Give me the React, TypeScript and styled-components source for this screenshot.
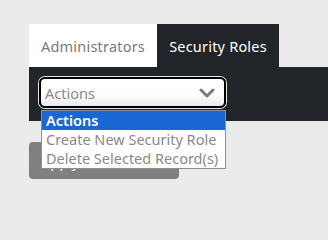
import React from 'react';
import styled, { createGlobalStyle } from 'styled-components';

const GlobalStyle = createGlobalStyle`
  html, body {
    margin: 0;
    padding: 0;
    background: #ebebeb;
    font-family: 'Noto Sans', 'Open Sans', sans-serif;
  }
`;

const Page = styled.div`
  padding: 24px 0 0 29px;
`;

const TabBar = styled.div`
  display: flex;
`;

const Tab = styled.div<{ $active?: boolean }>`
  display: flex;
  align-items: center;
  justify-content: center;
  height: 43px;
  width: ${(p) => (p.$active ? '122px' : '128px')};
  box-sizing: border-box;
  background: ${(p) => (p.$active ? '#212429' : '#ffffff')};
  color: ${(p) => (p.$active ? '#ffffff' : '#7a7a7a')};
  font-size: 14.5px;
  letter-spacing: 0.2px;
  padding-top: 1px;
`;

const Panel = styled.div`
  background: #212429;
  height: 54px;
  box-sizing: border-box;
  padding: 10px 10px;
`;

const SelectWrap = styled.div`
  position: relative;
  width: 187px;
`;

const SelectBox = styled.div`
  display: flex;
  align-items: center;
  justify-content: space-between;
  height: 31px;
  box-sizing: border-box;
  padding: 0 9px 0 4px;
  border: 2px solid #000;
  border-radius: 6px;
  box-shadow: 0 0 0 1px #e6e6e6;
  background: linear-gradient(#ffffff 0%, #ffffff 55%, #e9e9e9 100%);
  color: #8a8a8a;
  font-size: 14.5px;
`;

const OptionList = styled.ul`
  position: absolute;
  top: 33px;
  left: 2px;
  width: 185px;
  margin: 0;
  padding: 0;
  list-style: none;
  background: #fff;
  border: 1px solid #8f8f8f;
  box-sizing: border-box;
  z-index: 2;
`;

const Option = styled.li<{ $selected?: boolean }>`
  height: 19px;
  line-height: 19px;
  padding: 0 4px;
  font-size: 14.5px;
  white-space: nowrap;
  background: ${(p) => (p.$selected ? '#1967d2' : 'transparent')};
  color: ${(p) => (p.$selected ? '#ffffff' : '#8a8a8a')};
  font-weight: ${(p) => (p.$selected ? 600 : 400)};
`;

const ApplyButton = styled.button`
  display: block;
  margin-top: 21px;
  width: 150px;
  height: 37px;
  border: none;
  border-radius: 4px;
  background: #808080;
  color: #fff;
  font-family: inherit;
  font-size: 14.5px;
  padding: 0 0 0 12px;
  text-align: left;
`;

const Chevron = () => (
  <svg width="16" height="10" viewBox="0 0 16 10">
    <path d="M2 2 L8 8 L14 2" fill="none" stroke="#7d7d7d" strokeWidth="3" strokeLinecap="round" strokeLinejoin="round" />
  </svg>
);

const options = ['Actions', 'Create New Security Role', 'Delete Selected Record(s)'];

const App: React.FC = () => {
  return (
    <>
      <GlobalStyle />
      <Page>
        <TabBar>
          <Tab>Administrators</Tab>
          <Tab $active>Security Roles</Tab>
        </TabBar>
        <Panel>
          <SelectWrap>
            <SelectBox>
              <span>Actions</span>
              <Chevron />
            </SelectBox>
            <OptionList>
              {options.map((o, i) => (
                <Option key={o} $selected={i === 0}>
                  {o}
                </Option>
              ))}
            </OptionList>
          </SelectWrap>
        </Panel>
        <ApplyButton>Apply</ApplyButton>
      </Page>
    </>
  );
};

export default App;
